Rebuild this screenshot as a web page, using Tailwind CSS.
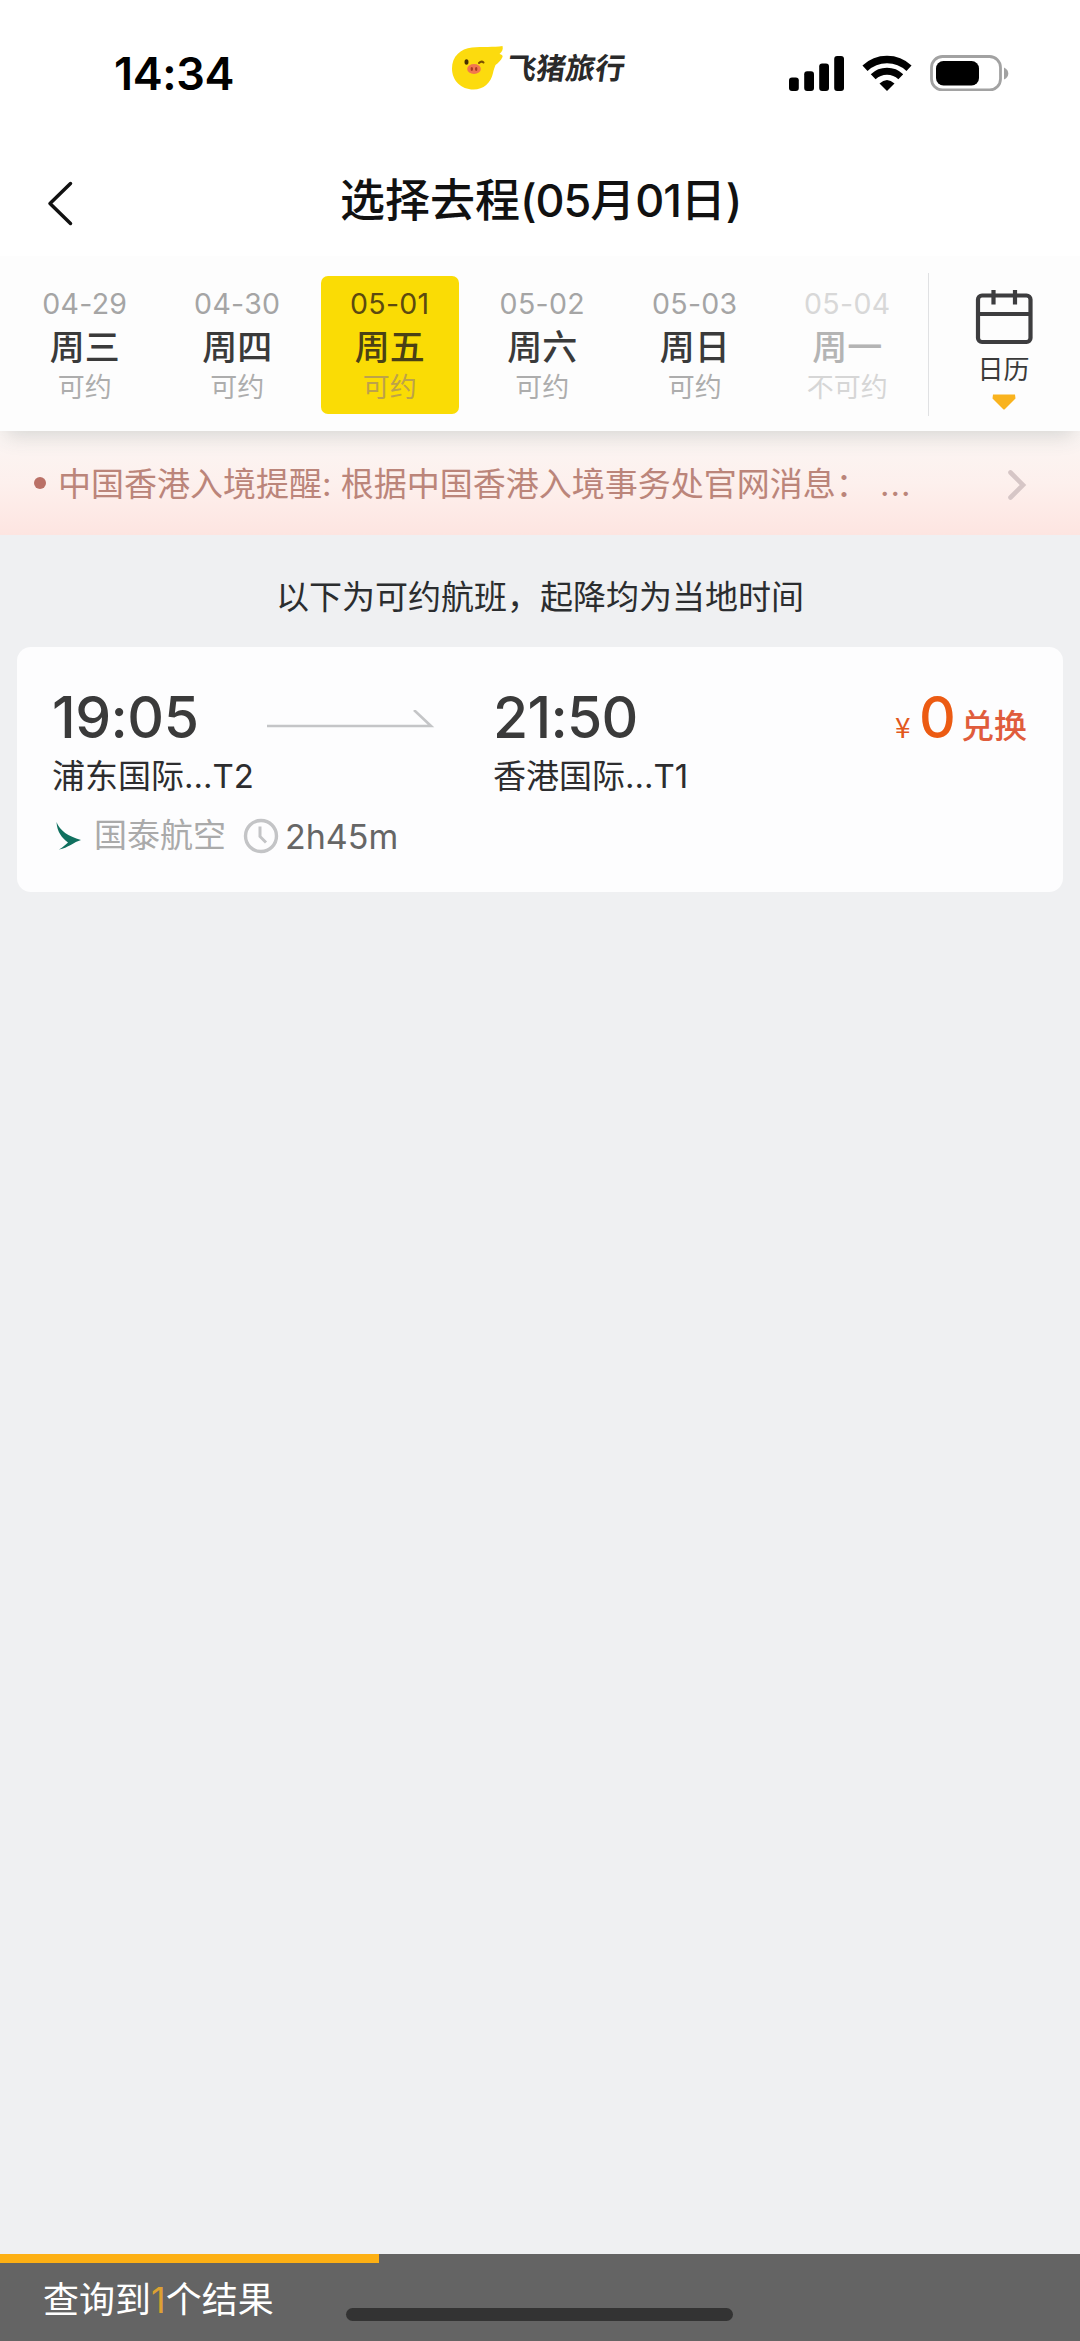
<!DOCTYPE html>
<html lang="zh-CN">
<head>
<meta charset="utf-8">
<title>选择去程</title>
<script src="https://cdn.jsdelivr.net/npm/@tailwindcss/browser@4"></script>
</head>
<body class="bg-[#eff0f2] font-[Inter,'Noto_Sans_CJK_SC',sans-serif] text-[#3a3a3a]">
<div class="flex h-[2341px] w-[1080px] flex-col overflow-hidden">

  <header class="relative z-10 h-[431px] shrink-0 bg-[#fdfdfd] shadow-[0_10px_20px_-6px_rgba(60,75,70,0.2)]">
    <!-- status bar -->
    <div class="flex h-[147px] items-center bg-white">
      <div class="w-[336px] pl-[114px] text-[45px] leading-none font-semibold tracking-[-0.4px] text-black">14:34</div>
      <div class="flex w-[339px] items-center pb-[12px] pl-[114px]">
        <svg class="h-[46px] w-[54px]" viewBox="0 0 54 46" fill="none">
          <path d="M22 2.500C32 1.500 44 2.500 52.500 1C53.500 4 52 7 49.500 9C52 9.500 53 10.500 52.500 12C51 15.500 48 18 45.500 20C44.500 23 43.500 25 43 28C41 38 33.500 44.500 23.500 44.500C11 44.500 2 35.500 2 23.500C2 11.500 10.500 3.500 22 2.500Z" fill="#fcdb0e"/>
          <ellipse cx="16.500" cy="17" rx="2" ry="2.800" fill="#463000"/>
          <path d="M29 18Q31.500 15.500 33.500 17.500" stroke="#7b5200" stroke-width="2" stroke-linecap="round"/>
          <ellipse cx="24" cy="24" rx="6.800" ry="5" fill="#f2764f"/>
          <ellipse cx="21.800" cy="24" rx="1.200" ry="1.900" fill="#a83a22"/>
          <ellipse cx="26.200" cy="24" rx="1.200" ry="1.900" fill="#a83a22"/>
        </svg>
        <div class="ml-[3px] -skew-x-[8deg] text-[29.5px] leading-[40px] font-bold text-[#2a2a2a]">飞猪旅行</div>
      </div>
      <div class="flex items-center pb-[2px] pl-[113px]">
        <svg class="h-[36px] w-[222px]" viewBox="788 54 222 36" fill="none">
          <rect x="789" y="76.500" width="9.800" height="13.500" rx="3" fill="#000"/>
          <rect x="804.200" y="70.300" width="9.800" height="19.700" rx="3" fill="#000"/>
          <rect x="819.200" y="62.500" width="9.800" height="27.500" rx="3" fill="#000"/>
          <rect x="834.200" y="55" width="9.800" height="35" rx="3" fill="#000"/>
          <path d="M865 67.200A32 32 0 0 1 909 67.200" stroke="#000" stroke-width="7.400"/>
          <path d="M873.200 75.800A20 20 0 0 1 900.800 75.800" stroke="#000" stroke-width="7"/>
          <path d="M879.500 82.500Q887 75.500 894.500 82.500L887 90Z" fill="#000"/>
          <rect x="931.500" y="55.500" width="69" height="33.500" rx="11" stroke="#a2a2a2" stroke-width="2.800"/>
          <rect x="936" y="60" width="43" height="24.400" rx="7.500" fill="#000"/>
          <path d="M1004 66.500Q1008.300 68.500 1008.300 72.500T1004 78.500Z" fill="#a2a2a2"/>
        </svg>
      </div>
    </div>
    <!-- title bar -->
    <div class="grid h-[109px] grid-cols-[340px_400px_340px] bg-white">
      <svg class="mt-[33px] ml-[46px] h-[48px] w-[28px]" viewBox="0 0 28 48" fill="none"><path d="M24.500 3.500L4 23.500L24.500 43.500" stroke="#111" stroke-width="3.500" stroke-linecap="round" stroke-linejoin="round"/></svg>
      <h1 class="text-center text-[45px] leading-[108px] font-medium whitespace-nowrap text-[#111]">选择去程<span class="tracking-[-1.100px]">(05</span>月<span class="tracking-[-1.100px]">01</span>日<span class="tracking-[-2px]">)</span></h1>
    </div>
    <!-- date strip -->
    <div class="flex h-[175px]">
      <div class="grid w-[928px] grid-cols-[repeat(6,152.500px)] pt-[20px] pl-[8.500px] text-center">
        <div class="mx-[7px] h-[138px] pt-2">
          <div class="text-[28.5px] leading-[40px] tracking-[0.300px] text-[#a5a5a5]">04-29</div>
          <div class="text-[35px] leading-[47px] font-medium">周三</div>
          <div class="text-[27px] leading-[33px] text-[#adadad]">可约</div>
        </div>
        <div class="mx-[7px] h-[138px] pt-2">
          <div class="text-[28.5px] leading-[40px] tracking-[0.300px] text-[#a5a5a5]">04-30</div>
          <div class="text-[35px] leading-[47px] font-medium">周四</div>
          <div class="text-[27px] leading-[33px] text-[#adadad]">可约</div>
        </div>
        <div class="mx-[7px] h-[138px] rounded-[7px] bg-[#fadc05] pt-2">
          <div class="text-[28.5px] leading-[40px] tracking-[0.300px] text-[#5c4a10]">05-01</div>
          <div class="text-[35px] leading-[47px] font-medium text-[#4a4116]">周五</div>
          <div class="text-[27px] leading-[33px] text-[#bda24a]">可约</div>
        </div>
        <div class="mx-[7px] h-[138px] pt-2">
          <div class="text-[28.5px] leading-[40px] tracking-[0.300px] text-[#a5a5a5]">05-02</div>
          <div class="text-[35px] leading-[47px] font-medium">周六</div>
          <div class="text-[27px] leading-[33px] text-[#adadad]">可约</div>
        </div>
        <div class="mx-[7px] h-[138px] pt-2">
          <div class="text-[28.5px] leading-[40px] tracking-[0.300px] text-[#a5a5a5]">05-03</div>
          <div class="text-[35px] leading-[47px] font-medium">周日</div>
          <div class="text-[27px] leading-[33px] text-[#adadad]">可约</div>
        </div>
        <div class="mx-[7px] h-[138px] pt-2">
          <div class="text-[28.5px] leading-[40px] tracking-[0.300px] text-[#d8d8d8]">05-04</div>
          <div class="text-[35px] leading-[47px] font-medium text-[#b4b4b4]">周一</div>
          <div class="text-[27px] leading-[33px] text-[#d6d6d6]">不可约</div>
        </div>
      </div>
      <div class="mt-[17px] h-[143px] w-px bg-[#e0e1e3]"></div>
      <div class="flex flex-1 flex-col items-center pt-[33px] pr-[2px]">
        <svg class="h-[56px] w-[58px]" viewBox="0 0 58 56" fill="none" stroke="#3d3d3f" stroke-width="4.200">
          <rect x="3" y="6.500" width="52.500" height="46.500" rx="4"/>
          <path d="M3 25H55.500M18.500 1V15.500M40 1V15.500"/>
        </svg>
        <div class="text-[26px] leading-[49px]">日历</div>
        <svg class="h-[16px] w-[24px]" viewBox="0 0 24 16"><path d="M1 .500H23L23.500 4.500L12.500 15.500H11.500L.500 4.500Z" fill="#f9b31e"/></svg>
      </div>
    </div>
  </header>

  <!-- entry notice -->
  <div class="flex h-[104px] shrink-0 items-center bg-linear-to-b from-[#fbf6f4] via-[#fdf0ed] to-[#fde5e1] pt-[3px] pl-[34px] text-[33px] text-[#bb857a]">
    <span class="mr-[12px] mb-[3px] size-[12px] rounded-full bg-[#ba7066]"></span>
    <span class="w-[949px] whitespace-pre">中国香港入境提醒: 根据中国香港入境事务处官网消息： <span class="ml-[2px] tracking-[1px]">...</span></span>
    <svg class="h-[32px] w-[20px]" viewBox="0 0 20 32" fill="none"><path d="M3.500 3.500L16 16L3.500 28.500" stroke="#d6c6c6" stroke-width="4.600" stroke-linecap="round"/></svg>
  </div>

  <main class="flex-1">
    <p class="h-[112px] pt-[2px] text-center text-[33px] leading-[121px] font-normal text-[#2b2d2f]">以下为可约航班，起降均为当地时间</p>
    <section class="mx-[17px] h-[245px] rounded-[14px] bg-[#fdfdfe] pt-[41px] pl-[35px]">
      <div class="flex h-[60px] items-center">
        <div class="w-[215px] text-[57px] leading-[60px] font-medium tracking-[-0.500px]">19:05</div>
        <svg class="mt-[6px] h-[22px] w-[226px]" viewBox="0 0 226 22" fill="none"><path d="M0 16H164L147 0" stroke="#c4c5c7" stroke-width="2.600"/></svg>
        <div class="w-[402px] text-[57px] leading-[60px] font-medium tracking-[-0.700px]">21:50</div>
        <div class="flex items-baseline pt-[8px] text-[#e2581c]">
          <span class="w-[24px] font-['Noto_Sans_CJK_SC'] text-[28px] leading-[60px]">¥</span>
          <span class="w-[42px] text-[57px] leading-[60px] font-medium text-[#ec5b13]">0</span>
          <span class="text-[33px] leading-[60px] font-medium text-[#e05c3c]">兑换</span>
        </div>
      </div>
      <div class="flex h-[58px] items-center text-[33px] text-[#2d2d2f]">
        <span class="w-[441px]">浦东国际...T2</span>
        <span>香港国际...T1</span>
      </div>
      <div class="flex h-[60px] items-center text-[33px] text-[#aaa]">
        <svg class="mr-[12px] ml-[4px] h-[28px] w-[26px]" viewBox="0 0 26 28"><path d="M.500 0C4 9 12 14 25 18C18 20 12 26 3 27.500C7 25 10 22.500 12 20.500C6 16 1 10 .500 0Z" fill="#10705f"/></svg>
        <span class="w-[149px]">国泰航空</span>
        <svg class="h-[36px] w-[36px]" viewBox="0 0 36 36" fill="none" stroke="#c3c4c6" stroke-width="3.400"><circle cx="18" cy="18" r="15.500"/><path d="M17 8.500V18.500L23 24.500" stroke-width="3"/></svg>
        <span class="ml-[6px] text-[34px] font-normal text-[#666]">2h45m</span>
      </div>
    </section>
  </main>

  <!-- result toast -->
  <footer class="relative h-[87px] shrink-0 bg-[#646464]">
    <div class="h-[9px] w-[379px] bg-[#fdb014]"></div>
    <div class="pl-[43px] text-[36px] leading-[74px] text-white">查询到<span class="text-[#dca132]">1</span>个结果</div>
    <div class="absolute top-[54px] left-[346px] h-[13px] w-[387px] rounded-full bg-[#333]"></div>
  </footer>
</div>
</body>
</html>
